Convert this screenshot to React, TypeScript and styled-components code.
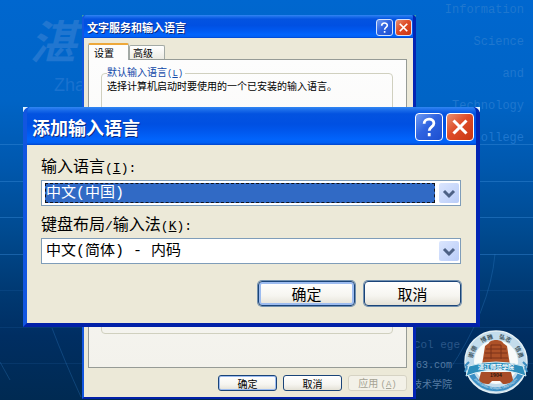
import React from "react";
import styled, { createGlobalStyle, css } from "styled-components";

const cjk = `"Noto Sans CJK SC", sans-serif`;
const mono = `"Liberation Mono", "Noto Sans CJK SC", monospace`;

const GlobalStyle = createGlobalStyle`
  * { box-sizing: border-box; }
  body { margin: 0; font-family: ${cjk}; color: #000; }
  button, select { font-family: inherit; }
`;

const Desktop = styled.div`
  position: relative;
  height: 100vh;
  min-height: 380px;
  overflow: hidden;
  background: linear-gradient(#0067cf 0%, #0064c6 25%, #0059b0 40%, #004a90 58%, #003a74 72%, #002e62 84%, #002a52 100%);
`;

const Backdrop = styled.svg`
  position: absolute;
  inset: 0;
  width: 100%;
  height: 100%;
`;

const Brand = styled.div`
  position: absolute;
  left: 30px;
  top: 8px;
  color: #2176d0;
`;

const BrandGlyph = styled.div`
  font: italic 700 46px/62px "Noto Sans CJK SC", sans-serif;
`;

const BrandLatin = styled.div`
  padding-left: 24px;
  font: 18px/30px "Liberation Sans", sans-serif;
  color: #1a72cf;
`;

const Motto = styled.div`
  position: absolute;
  right: 9px;
  top: -6px;
  display: flex;
  flex-direction: column;
  align-items: flex-end;
  font: 12px/32px "Liberation Mono", monospace;
  color: #1f77cf;
`;

const Contact = styled.div`
  position: absolute;
  right: 81px;
  bottom: 4px;
  display: flex;
  flex-direction: column;
  align-items: flex-end;
  font: 10px/20px ${mono};
  color: #557ba3;
`;

const ContactHead = styled.span`
  margin-right: -8px;
  font-size: 11px;
  line-height: 22px;
  color: #2a5688;
`;

const Emblem = styled.svg`
  position: absolute;
  right: 5px;
  bottom: 6px;
  width: 64px;
  height: 64px;
`;

type Size = { $large?: boolean };

const Shell = styled.section<Size>`
  position: absolute;
  display: flex;
  ${({ $large }) =>
    $large
      ? css`
          left: 23px;
          right: 53px;
          top: 107px;
          background:
            linear-gradient(#dff4ff, #dff4ff) left top / 5px 5px no-repeat,
            linear-gradient(#dff4ff, #dff4ff) right top / 5px 5px no-repeat;
        `
      : css`
          left: 82px;
          right: 117px;
          top: 15px;
          bottom: 1px;
          background:
            linear-gradient(#3aa0a0, #3aa0a0) left top / 2px 2px no-repeat,
            linear-gradient(#3aa0a0, #3aa0a0) right top / 2px 2px no-repeat;
        `}
`;

const Frame = styled.div<Size>`
  flex: 1;
  min-width: 0;
  display: flex;
  flex-direction: column;
  overflow: hidden;
  border-style: solid;
  border-color: #0a5be6 #0225b4 #0120a8 #1256e0;
  border-width: ${({ $large }) => ($large ? "0 4px 4px 4px" : "0 3px 2px 2px")};
  border-radius: ${({ $large }) => ($large ? "7px 7px 0 0" : "4px 4px 0 0")};
  background: #0152e0;
`;

const TitleBar = styled.header<Size>`
  display: flex;
  align-items: center;
  gap: ${({ $large }) => ($large ? 3 : 2)}px;
  height: ${({ $large }) => ($large ? 38 : 23)}px;
  padding: ${({ $large }) => ($large ? "2px 2px 0 5px" : "1px 1px 0 3px")};
  background: linear-gradient(#3186f2 0%, #1a6cea 8%, #0353e0 18%, #0050e2 45%, #0058ee 65%, #0164fc 85%, #0160f4 94%, #0144cc 100%);
`;

const Title = styled.h1<Size>`
  flex: 1;
  margin: 0;
  font-size: ${({ $large }) => ($large ? 18 : 11)}px;
  line-height: 22px;
  font-weight: 700;
  color: #fff;
  text-shadow: 1px 1px 0 #0a2a80;
  white-space: nowrap;
`;

const Caption = styled.button<Size & { $close?: boolean }>`
  display: grid;
  place-items: center;
  width: ${({ $large }) => ($large ? 28 : 17)}px;
  height: ${({ $large }) => ($large ? 28 : 17)}px;
  padding: 0;
  border: 1px solid ${({ $large }) => ($large ? "#fff" : "#d5e2fb")};
  border-radius: ${({ $large }) => ($large ? 4 : 3)}px;
  background: ${({ $close }) =>
    $close
      ? "linear-gradient(135deg, #e98f70, #de4c28 45%, #c93512)"
      : "linear-gradient(135deg, #6f9bf2, #2f63e0 45%, #1c4fd0)"};
  svg { display: block; width: 100%; height: 100%; }
`;

const Body = styled.div<Size>`
  flex: 1;
  display: flex;
  flex-direction: column;
  background: #ece9d8;
  padding: ${({ $large }) => ($large ? "9px 15px 17px 14px" : "4px 6px 6px 4px")};
`;

const Fields = styled.div`
  display: grid;
  gap: 6px;
`;

const Label = styled.label`
  display: block;
  font-size: 16px;
  line-height: 22px;
  height: 26px;
  white-space: pre;
`;

const Latin = styled.span<{ $small?: boolean }>`
  font-family: "Liberation Mono", monospace;
  font-size: ${({ $small }) => ($small ? 9 : 13)}px;
`;

const Combo = styled.div`
  display: flex;
  gap: 4px;
  height: 26px;
  padding: 2px 1px 2px 3px;
  border: 1px solid #7f9db9;
  background: #fff;
`;

const Select = styled.select<{ $active?: boolean }>`
  appearance: none;
  flex: 1;
  min-width: 0;
  margin: 0;
  padding: 1px 0 0;
  border: 1px ${({ $active }) => ($active ? "dashed #10131c" : "solid #fff")};
  border-radius: 0;
  outline: 0;
  background: ${({ $active }) => ($active ? "#316ac5" : "#fff")};
  color: ${({ $active }) => ($active ? "#fff" : "#000")};
  font: 15px/18px ${mono};
`;

const Arrow = styled.svg`
  width: 20px;
  height: 20px;
  border-radius: 2px;
  background: linear-gradient(135deg, #dbe6fe, #b9ccf8);
`;

const Actions = styled.footer<Size>`
  display: flex;
  justify-content: flex-end;
  gap: ${({ $large }) => ($large ? 9 : 6)}px;
  padding-top: ${({ $large }) => ($large ? 17 : 7)}px;
`;

const PushButton = styled.button<Size & { $primary?: boolean }>`
  width: ${({ $large }) => ($large ? 97 : 59)}px;
  height: ${({ $large }) => ($large ? 25 : 16)}px;
  padding: 0;
  border: 1px solid #1a4478;
  border-radius: ${({ $large }) => ($large ? 4 : 3)}px;
  background: linear-gradient(#fff, #f6f5f0 60%, #e4e1d6);
  box-shadow: ${({ $primary, $large }) =>
    $primary ? `inset 0 0 0 ${$large ? 2 : 1}px #9dbcf0` : "none"}${({ $large }) => ($large ? ", 0 0 0 1px #7391b0" : "")};
  ${({ $large, $primary }) => $large && !$primary && css`box-shadow: 0 0 0 1px #7391b0;`}
  color: #000;
  font-size: ${({ $large }) => ($large ? 15 : 10)}px;
  line-height: ${({ $large }) => ($large ? 20 : 13)}px;
  &:disabled {
    border-color: #d6d3c4;
    background: #f3f1e8;
    color: #a5a394;
  }
`;

const TabList = styled.div`
  display: flex;
  align-items: flex-end;
  height: 17px;
`;

const Tab = styled.button<{ $selected?: boolean }>`
  position: relative;
  width: ${({ $selected }) => ($selected ? 41 : 36)}px;
  height: ${({ $selected }) => ($selected ? 17 : 14)}px;
  margin-bottom: ${({ $selected }) => ($selected ? -1 : 0)}px;
  padding: 0 ${({ $selected }) => ($selected ? 16 : 14)}px 0 ${({ $selected }) => ($selected ? 5 : 3)}px;
  border: 1px solid #a3aaa5;
  border-bottom: 0;
  border-top: ${({ $selected }) => ($selected ? "2px solid #eda83a" : "1px solid #a3aaa5")};
  border-radius: 2px 2px 0 0;
  background: ${({ $selected }) => ($selected ? "#fdfdfc" : "linear-gradient(#fff, #ecebe3)")};
  z-index: ${({ $selected }) => ($selected ? 1 : 0)};
  font-size: 10px;
  line-height: 12px;
  text-align: left;
  white-space: nowrap;
`;

const Panel = styled.div`
  flex: 1;
  display: flex;
  padding: 6px 13px 33px 12px;
  border: 1px solid #969b96;
  background: linear-gradient(#fdfdfd, #f3f2ec);
`;

const Group = styled.fieldset`
  flex: 1;
  min-width: 0;
  margin: 0;
  padding: 0 5px;
  border: 1px solid #d0d0bf;
  border-radius: 4px;
`;

const Legend = styled.legend`
  padding: 0 2px 0 0;
  font-size: 10px;
  line-height: 12px;
  color: #1148a8;
`;

const Hint = styled.p`
  margin: 0;
  font-size: 10px;
  line-height: 12px;
  white-space: nowrap;
`;

function HelpIcon() {
  return (
    <svg viewBox="0 0 24 24" fill="none" stroke="#fff" strokeWidth="2.6" aria-hidden="true">
      <path d="M7.500 9C7.500 3.500 16.500 3.500 16.500 8.500C16.500 12 12.200 11.600 12.200 15.500" />
      <path d="M12.200 17.500v3" />
    </svg>
  );
}

function CloseIcon() {
  return (
    <svg viewBox="0 0 24 24" fill="none" stroke="#fff" strokeWidth="2.8" aria-hidden="true">
      <path d="M6 6L18 18M18 6L6 18" />
    </svg>
  );
}

function Chrome({ title, large, children }: { title: string; large?: boolean; children: React.ReactNode }) {
  return (
    <Shell $large={large} role="dialog" aria-label={title}>
      <Frame $large={large}>
        <TitleBar $large={large}>
          <Title $large={large}>{title}</Title>
          <Caption type="button" $large={large} aria-label="帮助"><HelpIcon /></Caption>
          <Caption type="button" $large={large} $close aria-label="关闭"><CloseIcon /></Caption>
        </TitleBar>
        <Body $large={large}>{children}</Body>
      </Frame>
    </Shell>
  );
}

function ComboBox({ id, value, active }: { id: string; value: string; active?: boolean }) {
  return (
    <Combo>
      <Select id={id} $active={active} defaultValue={value}>
        <option>{value}</option>
      </Select>
      <Arrow viewBox="0 0 20 20" aria-hidden="true">
        <path d="M5 8L10 13L15 8" fill="none" stroke="#4d6185" strokeWidth="3" />
      </Arrow>
    </Combo>
  );
}

const virtues = [
  { text: "崇德", at: "13%" },
  { text: "博雅", at: "38%" },
  { text: "弘志", at: "62%" },
  { text: "信勇", at: "87%" },
];

function School() {
  return (
    <Emblem viewBox="0 0 64 64" role="img" aria-label="湛江师范学院 1904">
      <defs>
        <path id="upper" d="M8.500 32A23.500 23.500 0 0 1 55.500 32" />
        <path id="lower" d="M5 40A28.500 28.500 0 0 0 59 40" />
      </defs>
      <circle cx="32" cy="32" r="31" fill="#c3dcec" stroke="#e4f0f5" strokeWidth="1.500" />
      <path d="M2 38A31 31 0 0 0 62 38L55 40A24 24 0 0 1 9 40Z" fill="#3c8fc5" />
      <circle cx="32" cy="32" r="22" fill="#f8fbfa" />
      <path d="M25 13C26 9 38 9 39 13L43 16L46 35H18L21 16Z" fill="#ad5128" />
      <path d="M27 15H37M22 19H42M21 23H43M20 28H44M27 15V29M37 15V29" stroke="#7b3218" fill="none" />
      <path d="M17 42H47L49 50C47 53 44 54 39 54L36 51H28L25 54C20 54 17 53 15 50Z" fill="#a84d28" />
      <path d="M5 36Q32 28 59 36L62 46L53 43Q32 37 11 43L2 46Z" fill="#2d8dbb" stroke="#d8edf4" strokeWidth="1" />
      <path d="M3 36L1 42M5 32L1 36M61 36L63 42M59 32L63 36" stroke="#3b8cc0" strokeWidth="2" />
      <g fontFamily="Noto Sans CJK SC, sans-serif" fontWeight="700">
        {virtues.map(({ text, at }) => (
          <text key={text} fontSize="6" fill="#3f5560">
            <textPath href="#upper" startOffset={at} textAnchor="middle">{text}</textPath>
          </text>
        ))}
        <text x="32" y="39" fontSize="6" fill="#f4fbff" textAnchor="middle">湛江师范学院</text>
        <text x="32" y="47" fontSize="5" fill="#2d170e" textAnchor="middle">1904</text>
      </g>
      <text fontSize="3" fill="#e3f3fa" fontFamily="Liberation Sans, sans-serif">
        <textPath href="#lower" startOffset="50%" textAnchor="middle">ZHANJIANG NORMAL UNIVERSITY</textPath>
      </text>
    </Emblem>
  );
}

export default function App() {
  return (
    <Desktop>
      <GlobalStyle />
      <Backdrop viewBox="0 0 533 400" preserveAspectRatio="none" fill="none" stroke="#3c8fdc" aria-hidden="true">
        <path d="M0 144.500H533M0 181.500H533M0 217.500H533M0 254.500H533" opacity="0.4" />
        <path d="M0 290.500H533M0 327.500H533M0 363.500H533" opacity="0.12" />
        <path d="M52 328Q64 360 81 397M0 362L10 380M495 254Q490 310 448 372" opacity="0.25" />
      </Backdrop>
      <Brand>
        <BrandGlyph>湛</BrandGlyph>
        <BrandLatin>Zha</BrandLatin>
      </Brand>
      <Motto>
        <span>Information</span>
        <span>Science</span>
        <span>and</span>
        <span>Technology</span>
        <span>College</span>
      </Motto>
      <Contact>
        <ContactHead>Col ege</ContactHead>
        <span>63.com</span>
        <span>技术学院</span>
      </Contact>
      <School />

      <Chrome title="文字服务和输入语言">
        <TabList role="tablist">
          <Tab type="button" role="tab" aria-selected="true" $selected>设置</Tab>
          <Tab type="button" role="tab" aria-selected="false">高级</Tab>
        </TabList>
        <Panel role="tabpanel">
          <Group>
            <Legend>默认输入语言<Latin $small>(<u>L</u>)</Latin></Legend>
            <Hint>选择计算机启动时要使用的一个已安装的输入语言。</Hint>
          </Group>
        </Panel>
        <Actions>
          <PushButton type="button" $primary>确定</PushButton>
          <PushButton type="button">取消</PushButton>
          <PushButton type="button" disabled>应用 <Latin $small>(<u>A</u>)</Latin></PushButton>
        </Actions>
      </Chrome>

      <Chrome title="添加输入语言" large>
        <Fields>
          <div>
            <Label htmlFor="language">输入语言<Latin>(<u>I</u>):</Latin></Label>
            <ComboBox id="language" value="中文(中国)" active />
          </div>
          <div>
            <Label htmlFor="layout">键盘布局<Latin>/</Latin>输入法<Latin>(<u>K</u>):</Latin></Label>
            <ComboBox id="layout" value="中文(简体) - 内码" />
          </div>
        </Fields>
        <Actions $large>
          <PushButton type="button" $large $primary>确定</PushButton>
          <PushButton type="button" $large>取消</PushButton>
        </Actions>
      </Chrome>
    </Desktop>
  );
}
